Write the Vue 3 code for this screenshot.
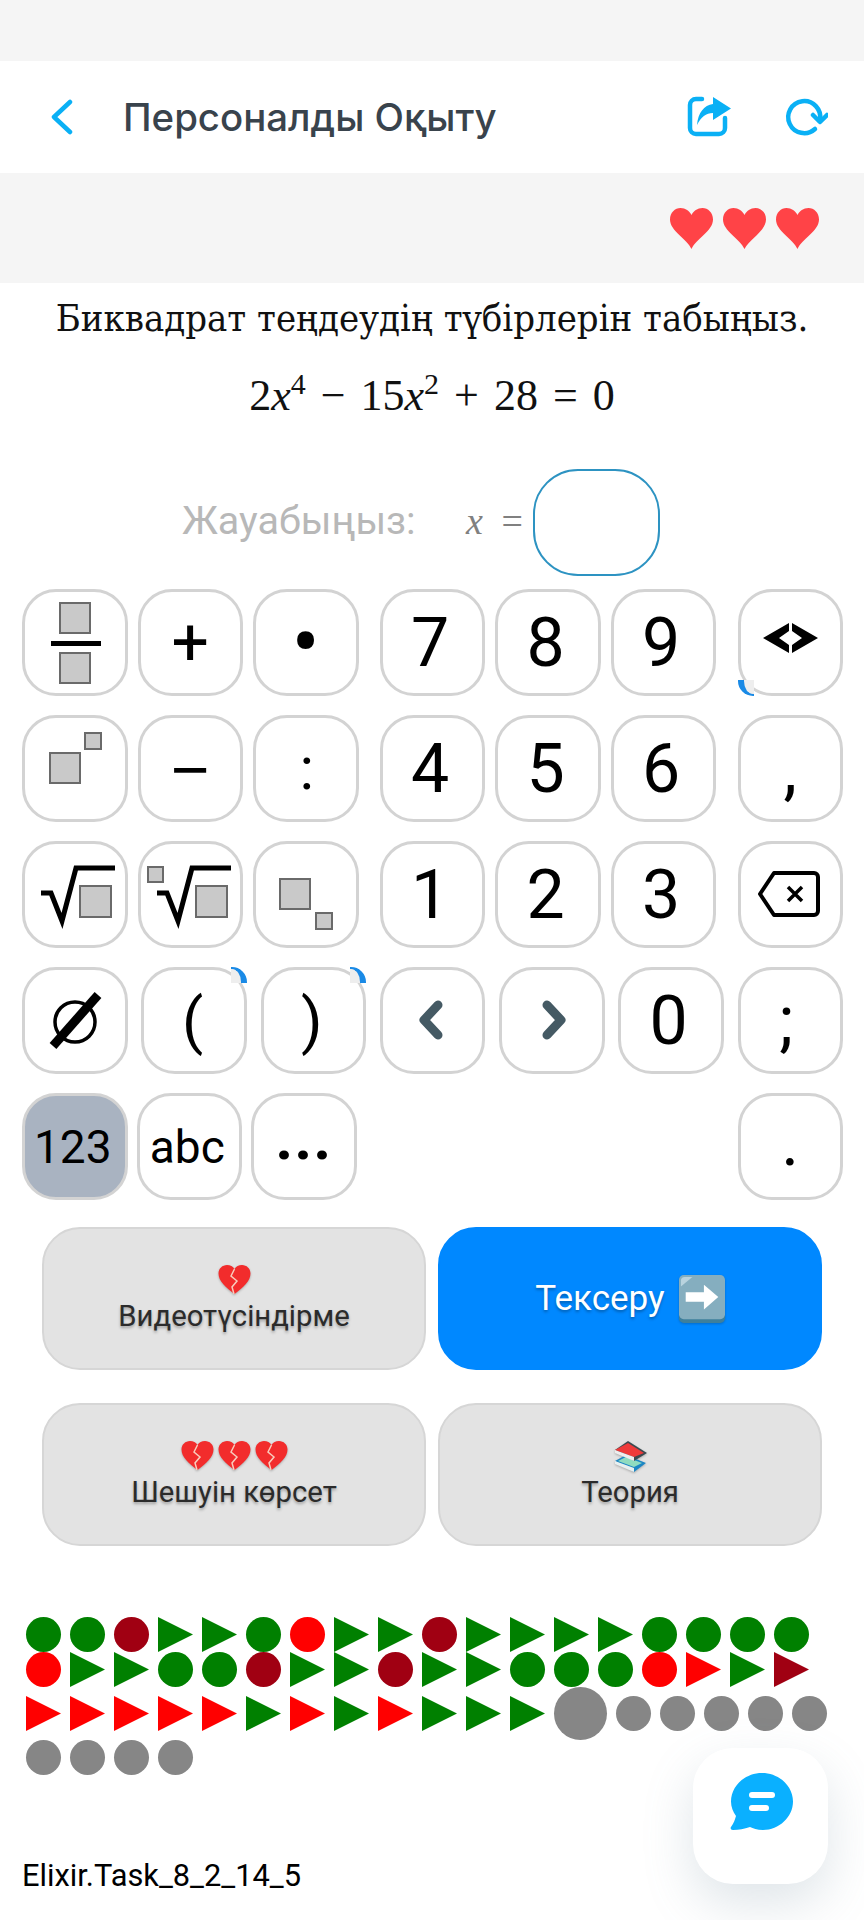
<template>
  <div class="page">
    <div class="status"></div>

    <header class="topbar">
      <svg class="back" width="24" height="36" viewBox="0 0 24 36">
        <polyline points="20,3 4,18 20,33" fill="none" stroke="#0ab0f5" stroke-width="4.5" stroke-linecap="round" stroke-linejoin="round" />
      </svg>
      <h1 class="title">Персоналды Оқыту</h1>
      <svg class="share" width="46" height="44" viewBox="0 0 46 44">
        <path d="M16 4H10A6 6 0 0 0 4 10V33A6 6 0 0 0 10 39H33A6 6 0 0 0 39 33V23" fill="none" stroke="#0ab0f5" stroke-width="4.5" stroke-linecap="round" />
        <path d="M27 2L45 13.5L27 25V18C20 18 15 22 11 30C12 18 18 10 27 9Z" fill="#0ab0f5" />
      </svg>
      <svg class="refresh" width="46" height="44" viewBox="0 0 46 44">
        <path d="M33 34A16 16 0 1 1 38 25" fill="none" stroke="#0ab0f5" stroke-width="4.5" stroke-linecap="round" />
        <path d="M31 20L38 27L45 20" fill="none" stroke="#0ab0f5" stroke-width="4.5" stroke-linecap="round" stroke-linejoin="round" />
      </svg>
    </header>

    <div class="lives">
      <svg v-for="n in 3" :key="n" width="45" height="41" viewBox="0 0 45 41">
        <path d="M22.5 41C18 31 1 23 1 11.5C1 4.500 6 0 11.500 0C16.500 0 20.500 3 22.500 7C24.500 3 28.500 0 33.500 0C39 0 44 4.500 44 11.500C44 23 27 31 22.500 41Z" fill="#ff4347" />
      </svg>
    </div>

    <p class="question">Биквадрат теңдеудің түбірлерін табыңыз.</p>
    <p class="formula">
      2<i>x</i><sup>4</sup><span class="op">−</span>15<i>x</i><sup>2</sup><span class="op">+</span>28<span class="op">=</span>0
    </p>

    <div class="answer">
      <span class="answer-label">Жауабыңыз:</span>
      <span class="answer-math"><i>x</i> =</span>
      <div class="answer-box"></div>
    </div>

    <div class="keyboard">
      <div v-for="(row, r) in rows" :key="r" class="kb-row">
        <div v-for="(group, g) in row" :key="g" class="kb-group">
          <div v-for="k in group" :key="k.id" class="key" :class="[k.cls, { active: k.active }]">
            <span v-if="k.corner" class="corner" :class="k.corner"></span>

            <svg v-if="k.icon" class="key-icon" width="106" height="107" viewBox="0 0 106 107">
              <template v-if="k.icon === 'frac'">
                <rect x="38" y="14" width="30" height="30" class="sq" />
                <rect x="29" y="52" width="50" height="5" />
                <rect x="38" y="64" width="30" height="30" class="sq" />
              </template>
              <template v-else-if="k.icon === 'pow'">
                <rect x="28" y="38" width="30" height="30" class="sq" />
                <rect x="63" y="18" width="16" height="16" class="sq" />
              </template>
              <template v-else-if="k.icon === 'sub'">
                <rect x="27" y="38" width="30" height="30" class="sq" />
                <rect x="63" y="72" width="16" height="16" class="sq" />
              </template>
              <template v-else-if="k.icon === 'root'">
                <polyline points="19,52 29,52 40,80 54,27 93,27" class="rootline" />
                <rect x="58" y="45" width="31" height="31" class="sq" />
              </template>
              <template v-else-if="k.icon === 'nroot'">
                <polyline points="19,52 29,52 40,80 54,27 93,27" class="rootline" />
                <rect x="58" y="45" width="31" height="31" class="sq" />
                <rect x="10" y="26" width="15" height="15" class="sq" />
              </template>
              <template v-else-if="k.icon === 'swap'">
                <path d="M51 34L25 49L51 64V56L41 49L51 42Z" />
                <path d="M54 34L80 49L54 64V56L64 49L54 42Z" />
              </template>
              <template v-else-if="k.icon === 'del'">
                <path d="M36 32H76A4 4 0 0 1 80 36V70A4 4 0 0 1 76 74H36L22 53Z" fill="none" stroke="#000" stroke-width="4" stroke-linejoin="round" />
                <path d="M50 46L64 60M64 46L50 60" stroke="#000" stroke-width="3.500" />
              </template>
              <template v-else-if="k.icon === 'empty'">
                <ellipse cx="53" cy="55" rx="20" ry="20" fill="none" stroke="#000" stroke-width="3.500" />
                <line x1="31" y1="79" x2="76" y2="28" stroke="#000" stroke-width="9" />
              </template>
              <polyline v-else-if="k.icon === 'left'" points="58,38 44,53 58,68" class="arrowline" />
              <polyline v-else-if="k.icon === 'right'" points="48,38 62,53 48,68" class="arrowline" />
            </svg>
            <template v-else>{{ k.text }}</template>
          </div>
        </div>
      </div>
    </div>

    <div class="actions">
      <button class="action">
        <span class="emoji-row">
          <svg width="33" height="30" viewBox="0 0 32 30">
            <path d="M16 29C7 22 0 16 0 8.500C0 3.500 4 0 8.500 0C11.800 0 14.500 1.500 16 4C17.500 1.500 20.200 0 23.500 0C28 0 32 3.500 32 8.500C32 16 25 22 16 29Z" fill="#f22c2c" />
            <polyline points="16,4 12.500,11 18.500,16 13.500,22 15.500,29" fill="none" stroke="#f8cdbd" stroke-width="1.500" />
          </svg>
        </span>
        Видеотүсіндірме
      </button>
      <button class="action primary">
        Тексеру
        <svg class="arrow-emoji" width="46" height="48" viewBox="0 0 48 50">
          <rect y="2" width="48" height="48" rx="5" fill="#3e7f9b" />
          <rect width="48" height="46" rx="5" fill="#85aebf" />
          <path d="M2 12V6A4 4 0 0 1 6 2H14Z" fill="#b9d3de" />
          <path d="M7 18H26V10L41 23L26 36V28H7Z" fill="#fff" />
        </svg>
      </button>
      <button class="action">
        <span class="emoji-row">
          <svg v-for="n in 3" :key="n" width="33" height="30" viewBox="0 0 32 30">
            <path d="M16 29C7 22 0 16 0 8.500C0 3.500 4 0 8.500 0C11.800 0 14.500 1.500 16 4C17.500 1.500 20.200 0 23.500 0C28 0 32 3.500 32 8.500C32 16 25 22 16 29Z" fill="#f22c2c" />
            <polyline points="16,4 12.500,11 18.500,16 13.500,22 15.500,29" fill="none" stroke="#f8cdbd" stroke-width="1.500" />
          </svg>
        </span>
        Шешуін көрсет
      </button>
      <button class="action">
        <span class="emoji-row">
          <svg width="33" height="32" viewBox="0 0 33 32">
            <polygon points="1,20 12,14 32,22 20,31" fill="#1c86c4" />
            <polygon points="4,20 12,16 28,22 20,26" fill="#8fdcc0" />
            <polygon points="1,20 20,27 20,31 1,23" fill="#e8f0f0" />
            <polygon points="1,9 14,0 33,12 20,20" fill="#3a4a50" />
            <polygon points="1,9 14,2 30,12 20,16" fill="#ee3a3a" />
            <polygon points="1,9 20,16 20,20 1,12" fill="#eeeeee" />
          </svg>
        </span>
        Теория
      </button>
    </div>

    <div class="progress">
      <span
        v-for="(p, i) in progress"
        :key="i"
        class="mark"
        :class="[p.shape, p.color, { current: p.current }]"
      ></span>
    </div>

    <footer class="task-id">Elixir.Task_8_2_14_5</footer>

    <div class="chat">
      <svg width="64" height="60" viewBox="0 0 64 60">
        <path d="M32 1C49 1 63 14 63 29.500C63 45 49 58 33 58C27 58 23 56 20 55C14 57 9 58 3 58C1 58 0 56 1 55C4 51 5 47 6 44C3 40 1 35 1 29.500C1 14 15 1 32 1Z" fill="#0ab0ff" />
        <rect x="19" y="20" width="26" height="6" rx="3" fill="#fff" />
        <rect x="19" y="33" width="20" height="6" rx="3" fill="#fff" />
      </svg>
    </div>
  </div>
</template>

<script setup>
const key = (id, text, extra = {}) => ({ id, text, ...extra });
const digit = (d) => key(d, d, { cls: "k-digit" });

const rows = [
  [
    [key("frac", "", { icon: "frac" }), key("plus", "+", { cls: "k-op" }), key("dot", "•", { cls: "k-dot" })],
    [digit("7"), digit("8"), digit("9")],
    [key("swap", "", { icon: "swap", corner: "bl" })],
  ],
  [
    [key("pow", "", { icon: "pow" }), key("minus", "−", { cls: "k-minus" }), key("colon", ":", { cls: "k-colon" })],
    [digit("4"), digit("5"), digit("6")],
    [key("comma", ",")],
  ],
  [
    [key("root", "", { icon: "root" }), key("nroot", "", { icon: "nroot" }), key("sub", "", { icon: "sub" })],
    [digit("1"), digit("2"), digit("3")],
    [key("del", "", { icon: "del" })],
  ],
  [
    [key("empty", "", { icon: "empty" })],
    [key("lp", "(", { corner: "tr", cls: "k-paren" })],
    [key("rp", ")", { corner: "tr", cls: "k-paren" })],
    [key("left", "", { icon: "left" })],
    [key("right", "", { icon: "right" })],
    [digit("0")],
    [key("semi", ";", { cls: "k-semi" })],
  ],
  [
    [
      key("123", "123", { active: true, cls: "small" }),
      key("abc", "abc", { cls: "small" }),
      key("more", "...", { cls: "k-more" }),
    ],
    [key("point", ".", { cls: "k-point" })],
  ],
];

// c = circle, t = triangle
const codes =
  "gc gc dc gt gt gc rc gt gt dc gt gt gt gt gc gc gc gc " +
  "rc gt gt gc gc dc gt gt dc gt gt gc gc gc rc rt gt dt " +
  "rt rt rt rt rt gt rt gt rt gt gt gt";
const names = { g: "green", r: "red", d: "dark" };

const progress = codes.split(" ").map((c) => ({
  color: names[c[0]],
  shape: c[1] === "c" ? "circle" : "triangle",
}));
progress.push({ color: "gray", shape: "circle", current: true });
for (let i = 0; i < 9; i++) {
  progress.push({ color: "gray", shape: "circle" });
}
</script>

<style>
html,
body {
  margin: 0;
  background: #fff;
}
</style>

<style scoped>
.page {
  position: relative;
  width: 864px;
  height: 1920px;
  overflow: hidden;
  background: #fff;
  font-family: Roboto, sans-serif;
  color: #000;
}

.status {
  height: 61px;
  background: #f5f5f5;
}

/* Top bar */
.topbar {
  height: 112px;
  display: flex;
  align-items: center;
  padding-left: 50px;
  background: #fff;
}

.title {
  margin: 0 0 0 49px;
  flex: 1;
  font-family: Inter, sans-serif;
  font-size: 38.4px;
  font-weight: 500;
  color: #39434c;
  white-space: nowrap;
}

.refresh {
  margin-left: 50px;
  margin-right: 36px;
}

.lives {
  height: 110px;
  box-sizing: border-box;
  padding: 0 44px 0 0;
  display: flex;
  justify-content: flex-end;
  align-items: center;
  gap: 8px;
  background: #f5f5f5;
}

/* Question */
.question {
  margin: 0;
  height: 70px;
  line-height: 70px;
  text-align: center;
  font-family: "DejaVu Serif", serif;
  font-stretch: condensed;
  font-size: 37.9px;
  color: #111;
  white-space: nowrap;
}

.formula {
  margin: 0;
  height: 84px;
  line-height: 86px;
  text-align: center;
  font-family: "Liberation Serif", serif;
  font-size: 44px;
  color: #111;
  white-space: nowrap;
}

.formula sup {
  font-size: 30px;
  line-height: 0;
}

.op {
  margin: 0 15px;
}

/* Answer */
.answer {
  margin-top: 32px;
  height: 107px;
  display: flex;
  align-items: center;
  padding-left: 182px;
}

.answer-label {
  margin-bottom: 4px;
  font-size: 39.5px;
  color: #b8b8b8;
  width: 284px;
}

.answer-math {
  width: 67px;
  margin-bottom: 3px;
  font-family: "Liberation Serif", serif;
  font-size: 38px;
  word-spacing: 9px;
  color: #808080;
  white-space: nowrap;
}

.answer-box {
  width: 127px;
  height: 107px;
  box-sizing: border-box;
  border: 2px solid #2d93c2;
  border-radius: 45px;
}

/* Keyboard */
.keyboard {
  margin-top: 13px;
  padding: 0 21px 0 22px;
  display: flex;
  flex-direction: column;
  gap: 19px;
}

.kb-row {
  display: flex;
  justify-content: space-between;
}

.kb-row:last-child .kb-group {
  gap: 9px;
}

.kb-group {
  display: flex;
  gap: 10px;
}

.key {
  position: relative;
  width: 105.5px;
  height: 107px;
  box-sizing: border-box;
  border: 3px solid #d3d3d3;
  border-radius: 34px;
  display: flex;
  align-items: center;
  justify-content: center;
  font-size: 68px;
  line-height: 1;
  background: #fff;
}

.key.k-digit {
  padding-right: 5px;
}

.key.small {
  font-size: 46px;
  padding-right: 4px;
}

.key.k-op {
  font-size: 66px;
}

.key.k-minus {
  font-family: "Liberation Sans", sans-serif;
  font-size: 66px;
}

.key.k-dot {
  font-size: 84px;
}

.key.k-colon {
  font-size: 60px;
  padding-left: 2px;
}

.key.k-semi {
  padding-right: 8px;
}

.key.k-paren {
  font-size: 62px;
  padding-right: 3px;
}

.key.k-more {
  font-size: 62px;
  font-weight: 700;
  letter-spacing: 1px;
  padding-bottom: 17px;
}

.key.k-point {
  padding-bottom: 10px;
}

.key.active {
  background: #a9b3c1;
}

.key-icon {
  position: absolute;
  left: -3px;
  top: -3px;
}

.sq {
  fill: #c9c9c9;
  stroke: #6a6a6a;
  stroke-width: 2;
}

.rootline {
  fill: none;
  stroke: #000;
  stroke-width: 5;
}

.arrowline {
  fill: none;
  stroke: #455a64;
  stroke-width: 9;
  stroke-linecap: round;
  stroke-linejoin: round;
}

.corner {
  position: absolute;
  width: 16px;
  height: 16px;
  box-sizing: border-box;
  background: #eeeeee;
}

.corner.bl {
  left: -3px;
  bottom: -3px;
  border-left: 6px solid #1a8ae6;
  border-bottom: 2px solid #1a8ae6;
  border-bottom-left-radius: 15px;
}

.corner.tr {
  right: -3px;
  top: -3px;
  border-right: 6px solid #1a8ae6;
  border-top: 2px solid #1a8ae6;
  border-top-right-radius: 15px;
}

/* Action buttons */
.actions {
  margin-top: 27px;
  padding: 0 42px;
  display: grid;
  grid-template-columns: 384px 384px;
  grid-auto-rows: 143px;
  column-gap: 12px;
  row-gap: 33px;
}

.action {
  display: flex;
  flex-direction: column;
  align-items: center;
  justify-content: center;
  padding: 0;
  border: 2px solid #d6d6d6;
  border-radius: 38px;
  background: #e3e3e3;
  font-family: Roboto, sans-serif;
  font-size: 29.3px;
  color: #2b2b2b;
  text-shadow: 0 2px 3px rgba(0, 0, 0, 0.3);
}

.action.primary {
  flex-direction: row;
  gap: 14px;
  border-color: #0088ff;
  background: #0088ff;
  color: #fff;
  font-size: 35px;
}

.emoji-row {
  display: flex;
  gap: 4px;
  height: 34px;
  filter: drop-shadow(0 1px 1px rgba(0, 0, 0, 0.25));
}

.arrow-emoji {
  filter: drop-shadow(0 1px 1px rgba(0, 0, 0, 0.2));
}

/* Progress marks */
.progress {
  margin-top: 71px;
  padding: 0 24px 0 26px;
  display: flex;
  flex-wrap: wrap;
  align-items: center;
}

.mark {
  width: 35px;
  height: 35px;
  margin-right: 9px;
}

.circle {
  border-radius: 50%;
}

.triangle {
  clip-path: polygon(0 0, 100% 50%, 0 100%);
}

.mark.current {
  width: 53px;
  height: 53px;
}

.green {
  background: #008000;
}

.red {
  background: #ff0000;
}

.dark {
  background: #a00012;
}

.gray {
  background: #868686;
}

.task-id {
  margin-top: 82px;
  padding-left: 22px;
  font-size: 30.8px;
  line-height: 38px;
}

/* Floating chat button */
.chat {
  position: absolute;
  left: 693px;
  top: 1748px;
  width: 135px;
  height: 136px;
  box-sizing: border-box;
  padding: 24px 0 0 37px;
  border-radius: 40px;
  background: #fff;
  box-shadow: 0 20px 50px rgba(110, 135, 155, 0.22);
}
</style>
